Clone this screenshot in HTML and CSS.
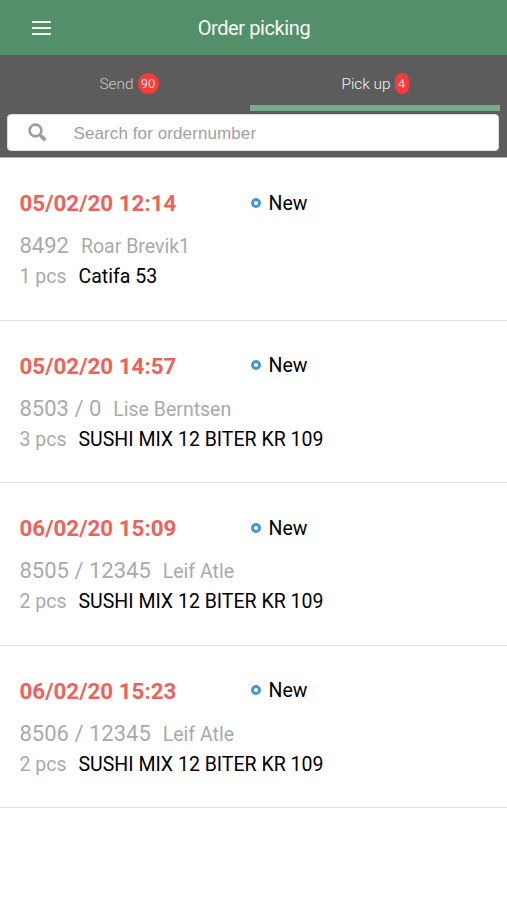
FILE: index.html
```html
<!DOCTYPE html>
<html lang="en">
<head>
<meta charset="utf-8">
<title>Order picking</title>
<link rel="stylesheet" href="styles.css">
</head>
<body>
<header class="topbar">
<svg class="menu" viewBox="0 0 19 14"><path d="M0 1h19M0 7h19M0 13h19"/></svg>
<h1>Order picking</h1>
</header>
<section class="tools">
<nav class="tabs">
<a class="tab"><span>Send</span><b class="badge">90</b></a>
<a class="tab active"><span>Pick up</span><b class="badge single">4</b></a>
</nav>
<div class="search">
<svg viewBox="0 0 19 19"><circle cx="7.5" cy="7.5" r="5.9"/><path d="M12 12l2 2"/><path class="handle" d="M13.2 13.2l4 4"/></svg>
<span>Search for ordernumber</span>
</div>
</section>
<main>
<article class="order">
<div class="head"><time>05/02/20 12:14</time><span class="status"><i></i>New</span></div>
<div class="who"><span class="num">8492</span><span>Roar Brevik1</span></div>
<div class="item"><span class="qty">1 pcs</span><span>Catifa 53</span></div>
</article>
<article class="order">
<div class="head"><time>05/02/20 14:57</time><span class="status"><i></i>New</span></div>
<div class="who"><span class="num">8503 / 0</span><span>Lise Berntsen</span></div>
<div class="item"><span class="qty">3 pcs</span><span>SUSHI MIX 12 BITER KR 109</span></div>
</article>
<article class="order">
<div class="head"><time>06/02/20 15:09</time><span class="status"><i></i>New</span></div>
<div class="who"><span class="num">8505 / 12345</span><span>Leif Atle</span></div>
<div class="item"><span class="qty">2 pcs</span><span>SUSHI MIX 12 BITER KR 109</span></div>
</article>
<article class="order">
<div class="head"><time>06/02/20 15:23</time><span class="status"><i></i>New</span></div>
<div class="who"><span class="num">8506 / 12345</span><span>Leif Atle</span></div>
<div class="item"><span class="qty">2 pcs</span><span>SUSHI MIX 12 BITER KR 109</span></div>
</article>
</main>
</body>
</html>
```
FILE: styles.css
```css
* { box-sizing: border-box; }
body { margin: 0; min-height: 900px; background: #fff; font-family: Roboto, sans-serif; color: #000; }
.topbar { height: 55px; background: #548f6b; color: #fff; display: grid; grid-template-columns: 83px 1fr 82px; align-items: center; }
.menu { width: 19px; height: 14px; margin-left: 32px; stroke: #f2fbf0; stroke-width: 2; }
h1 { margin: 0; font-size: 20px; font-weight: 400; letter-spacing: -0.4px; text-align: center; line-height: 24px; color: #f6fdf4; }
.tools { height: 103px; background: #5c5c5c; border-bottom: 1px solid #b4b4b4; }
.tabs { display: grid; grid-template-columns: 250px 250px; height: 56px; }
.tab { display: flex; align-items: center; justify-content: center; gap: 4px; color: #c8c8c8; font-size: 15.4px; font-weight: 300; padding-left: 8px; border-bottom: 6px solid transparent; padding-top: 7px; }
.tab.active { color: #f4f4f4; padding-left: 0; border-color: #7aab8b; }
.badge { background: #fb3a3a; color: #ffd6d6; font-size: 13px; font-weight: 400; width: 21px; height: 21px; line-height: 22px; border-radius: 10.5px; text-align: center; }
.single { width: 14px; border-radius: 7px; }
.search { margin: 3px 8.5px 0 7px; height: 37px; background: #fff; border: 1px solid #ddd; border-radius: 4px; display: flex; align-items: center; padding-left: 20px; font: 17px "Liberation Sans", sans-serif; letter-spacing: 0.1px; color: #a0a0a0; }
.search span { padding-top: 2px; }
.search svg { width: 19px; height: 19px; margin-right: 26.5px; fill: none; stroke: #9d9d9d; stroke-width: 2.6; }
.search .handle { stroke-width: 3.8; }
.order { height: 162.5px; padding: 30px 19.5px 0; border-bottom: 1px solid #dedede; }
.head { display: grid; grid-template-columns: 231.5px 1fr; align-items: center; height: 30px; }
time { color: #ee625c; font-size: 22.4px; font-weight: 700; }
.status { display: flex; align-items: center; font-size: 19.5px; }
.status i { width: 10px; height: 10px; border: 3px solid #4297dc; border-radius: 50%; margin: -1px 7.5px 0 0; }
.who { display: flex; align-items: baseline; gap: 12px; margin-top: 13px; height: 31px; line-height: 30px; font-size: 19.5px; color: #aaa; }
.num { font-size: 22px; }
.item { display: flex; gap: 12px; height: 30px; line-height: 30px; font-size: 19.5px; }
.qty { color: #aaa; }
```
